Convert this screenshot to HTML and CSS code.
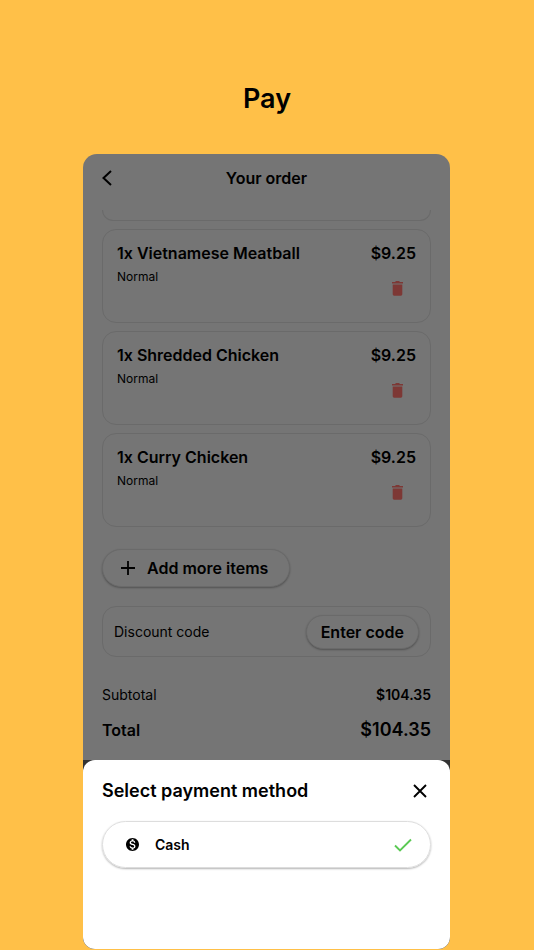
FILE: index.html
```
<!DOCTYPE html>
<html lang="en">
<head>
  <meta charset="UTF-8">
  <meta name="viewport" content="width=device-width, initial-scale=1.0">
  <title>Pay</title>
  <link rel="stylesheet" href="styles.css">
</head>
<body>
  <h1 class="page-title">Pay</h1>

  <main class="phone">
    <header class="order-header">
      <button type="button" class="icon-btn" aria-label="Back">
        <svg width="12" height="18" viewBox="0 0 12 18"><path d="M10 2 2.500 9l7.500 7" fill="none" stroke="#000" stroke-width="2"/></svg>
      </button>
      <h2>Your order</h2>
    </header>

    <!-- Order items -->
    <section class="order">
      <div class="item item-cut"></div>
      <article class="item">
        <div class="item-row"><h3>1x Vietnamese Meatball</h3><span class="price">$9.25</span></div>
        <p>Normal</p>
        <button type="button" class="icon-btn delete" aria-label="Remove">
          <svg width="11" height="15" viewBox="0 0 11 15"><path d="M0 1h3L4 0h3l1 1h3v1.500H0zM.7 3.400h9.600v9.900q0 1.400-1.400 1.400H2.100Q.7 14.700.7 13.300z" fill="#7d3835"/></svg>
        </button>
      </article>
      <article class="item">
        <div class="item-row"><h3>1x Shredded Chicken</h3><span class="price">$9.25</span></div>
        <p>Normal</p>
        <button type="button" class="icon-btn delete" aria-label="Remove">
          <svg width="11" height="15" viewBox="0 0 11 15"><path d="M0 1h3L4 0h3l1 1h3v1.500H0zM.7 3.400h9.600v9.900q0 1.400-1.400 1.400H2.100Q.7 14.700.7 13.300z" fill="#7d3835"/></svg>
        </button>
      </article>
      <article class="item">
        <div class="item-row"><h3>1x Curry Chicken</h3><span class="price">$9.25</span></div>
        <p>Normal</p>
        <button type="button" class="icon-btn delete" aria-label="Remove">
          <svg width="11" height="15" viewBox="0 0 11 15"><path d="M0 1h3L4 0h3l1 1h3v1.500H0zM.7 3.400h9.600v9.900q0 1.400-1.400 1.400H2.100Q.7 14.700.7 13.300z" fill="#7d3835"/></svg>
        </button>
      </article>

      <button type="button" class="btn btn-add">
        <svg width="14" height="14" viewBox="0 0 14 14"><path d="M7 0v14M0 7h14" stroke="#000" stroke-width="1.800"/></svg>
        Add more items
      </button>

      <div class="discount">
        <span>Discount code</span>
        <button type="button" class="btn btn-code">Enter code</button>
      </div>

      <div class="sum"><span>Subtotal</span><strong>$104.35</strong></div>
      <div class="sum sum-total"><span>Total</span><strong>$104.35</strong></div>
    </section>

    <!-- Payment sheet -->
    <div class="sheet-wrap">
      <section class="sheet">
        <div class="sheet-header">
          <h2>Select payment method</h2>
          <button type="button" class="icon-btn close" aria-label="Close">
            <svg width="14" height="14" viewBox="0 0 14 14"><path d="m1 1 12 12M13 1 1 13" stroke="#000" stroke-width="1.900"/></svg>
          </button>
        </div>
        <label class="method" for="cash">
          <input type="radio" id="cash" name="method" checked>
          <svg width="13" height="13" viewBox="2 2 20 20"><path d="M12 2C6.480 2 2 6.480 2 12s4.480 10 10 10 10-4.480 10-10S17.520 2 12 2zm1.410 16.090V20h-2.670v-1.930c-1.710-.36-3.160-1.460-3.270-3.400h1.960c.1 1.050.82 1.870 2.650 1.870 1.960 0 2.400-.98 2.400-1.590 0-.83-.44-1.610-2.670-2.140-2.480-.6-4.180-1.620-4.180-3.670 0-1.720 1.390-2.840 3.110-3.210V4h2.670v1.950c1.860.45 2.790 1.860 2.850 3.390H14.300c-.05-1.110-.64-1.870-2.220-1.870-1.500 0-2.400.68-2.400 1.640 0 .84.65 1.390 2.670 1.910s4.180 1.390 4.180 3.910c-.01 1.830-1.380 2.830-3.120 3.160z" fill="#000"/></svg>
          <span>Cash</span>
          <svg class="check" width="18" height="14" viewBox="0 0 18 14"><path d="m1 7.500 5 5L17 1.500" fill="none" stroke="#5bc954" stroke-width="1.900"/></svg>
        </label>
      </section>
    </div>
  </main>
</body>
</html>
```
FILE: styles.css
```
/* Global Styles */
* {
  box-sizing: border-box;
}

body {
  font-family: Inter, "Liberation Sans", sans-serif;
  background: #ffc048;
  color: #000;
  margin: 0;
  min-height: 100vh;
}

h1, h2, h3, p {
  margin: 0;
  font-weight: 600;
}

button {
  font-family: inherit;
  color: inherit;
  padding: 0;
  cursor: pointer;
}

svg {
  display: block;
  flex: none;
}

.page-title {
  padding: 82px 0 38px;
  font-size: 27px;
  line-height: 34px;
  text-align: center;
}

.phone {
  margin: 0 84px 0 83px;
  background: #757575;
  border-radius: 14px 14px 12px 12px;
  overflow: hidden;
}

.icon-btn {
  background: none;
  border: none;
}

/* Header */
.order-header {
  display: grid;
  grid-template-columns: 24px 1fr 24px;
  align-items: center;
  height: 47px;
  padding: 0 18px;
}

.order-header .icon-btn {
  justify-self: start;
}

.order-header h2 {
  font-size: 16px;
  line-height: 20px;
  text-align: center;
}

/* Order */
.order {
  display: flex;
  flex-direction: column;
  gap: 8px;
  padding: 9px 19px 20px;
}

.item {
  height: 94px;
  padding: 13px 14px;
  border: 1px solid #6a6a6a;
  border-radius: 14px;
}

.item-cut {
  height: 11px;
  padding: 0;
  border-top: none;
  border-radius: 0 0 14px 14px;
}

.item-row {
  display: flex;
  justify-content: space-between;
}

.item h3,
.price {
  font-size: 16px;
  font-weight: 600;
  line-height: 20px;
}

.item p {
  margin-top: 6px;
  font-size: 12px;
  font-weight: 400;
  line-height: 16px;
}

.delete {
  display: block;
  margin: -4px 13px 0 auto;
}

/* Buttons */
.btn {
  background: #757575;
  border: 1px solid #6a6a6a;
  border-radius: 20px;
  box-shadow: 0 1px 2px rgba(0, 0, 0, 0.3);
  font-size: 16px;
  font-weight: 600;
  line-height: 20px;
}

.btn-add {
  display: flex;
  align-items: center;
  align-self: flex-start;
  gap: 12px;
  height: 38px;
  margin-top: 14px;
  padding: 0 21px 0 18px;
}

.discount {
  display: flex;
  align-items: center;
  justify-content: space-between;
  height: 51px;
  margin-top: 11px;
  padding: 0 11px;
  border: 1px solid #6a6a6a;
  border-radius: 14px;
  font-size: 14px;
}

.btn-code {
  height: 34px;
  padding: 0 14px;
}

/* Totals */
.sum {
  display: flex;
  justify-content: space-between;
  margin-top: 20px;
  font-size: 14px;
  line-height: 20px;
}

.sum strong {
  font-weight: 600;
}

.sum-total {
  margin-top: 7px;
  font-size: 18px;
  font-weight: 600;
}

.sum-total span {
  font-size: 16px;
}

/* Payment sheet */
.sheet-wrap {
  background: #333;
}

.sheet {
  min-height: 189px;
  padding: 19px 19px 18px;
  background: #fff;
  border-radius: 12px 12px 0 0;
}

.sheet-header {
  display: flex;
  align-items: center;
  justify-content: space-between;
}

.sheet-header h2 {
  font-size: 18px;
  line-height: 24px;
}

.close {
  padding: 4px;
}

.method {
  display: flex;
  align-items: center;
  gap: 16px;
  height: 47px;
  margin-top: 18px;
  padding: 0 18px 0 23px;
  border: 1px solid #ddd;
  border-radius: 24px;
  box-shadow: 0 1px 2px rgba(0, 0, 0, 0.3);
  font-size: 14px;
  font-weight: 600;
  cursor: pointer;
}

.method input {
  position: absolute;
  opacity: 0;
}

.check {
  margin-left: auto;
  visibility: hidden;
}

.method input:checked ~ .check {
  visibility: visible;
}
```
